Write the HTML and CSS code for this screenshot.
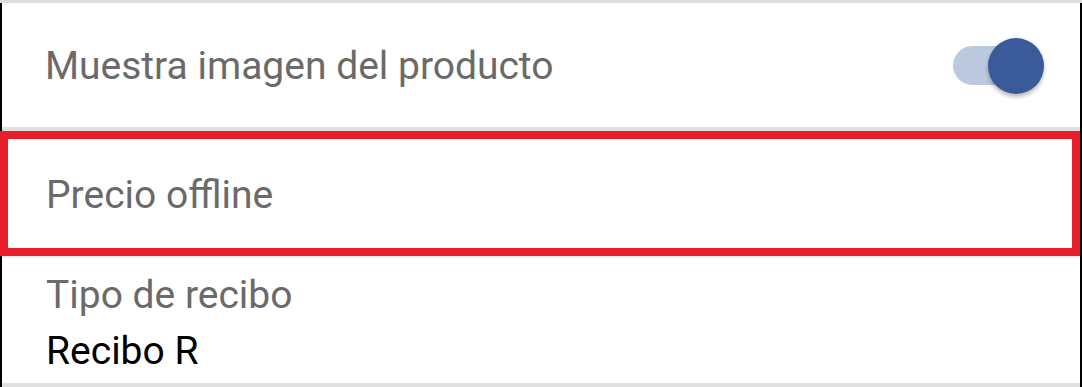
FILE: index.html
```html
<!DOCTYPE html>
<html lang="es">
<head>
<meta charset="utf-8">
<link rel="stylesheet" href="styles.css">
</head>
<body>
<div class="frame">
  <div class="row row-toggle">
    <span class="label">Muestra imagen del producto</span>
    <span class="toggle"><span class="track"></span><span class="knob"></span></span>
  </div>
  <div class="sep"></div>
  <div class="highlight-wrap">
    <div class="row row-highlight">
      <span class="label">Precio offline</span>
    </div>
  </div>
  <div class="sep thin"></div>
  <div class="row row-value">
    <span class="label">Tipo de recibo</span>
    <span class="value">Recibo R</span>
  </div>
  <div class="sep bottom"></div>
</div>
</body>
</html>
```
FILE: styles.css
```css
html, body {
  margin: 0;
  padding: 0;
  background: #ffffff;
}
.frame {
  width: 1082px;
  height: 387px;
  overflow: hidden;
  display: flex;
  flex-direction: column;
  border-top: 3px solid #dedede;
  box-sizing: border-box;
  font-family: Roboto, "Liberation Sans", sans-serif;
  font-size: 39px;
  line-height: 46px;
}
.row {
  border-left: 2px solid #000;
  border-right: 2px solid #000;
  background: #fff;
  padding-left: 44px;
}
.label {
  color: #6a6a6a;
}
.row-toggle {
  height: 124px;
  box-sizing: border-box;
  display: flex;
  align-items: center;
  justify-content: space-between;
  padding-right: 36px;
  padding-top: 1px;
  padding-left: 43px;
}
.toggle {
  position: relative;
  width: 91px;
  height: 56px;
  flex: none;
}
.track {
  position: absolute;
  left: 0;
  top: 8px;
  width: 78px;
  height: 39px;
  border-radius: 20px;
  background: #bdc9df;
}
.knob {
  position: absolute;
  right: 0;
  top: 0;
  width: 56px;
  height: 56px;
  border-radius: 50%;
  background: #3a5a99;
  box-shadow: 0 3px 4px rgba(0, 0, 0, 0.28);
}
.sep {
  height: 4px;
  background: #e0e0e0;
  border-left: 2px solid #000;
  border-right: 2px solid #000;
}
.sep.thin {
  height: 2px;
  background: #ececec;
}
.sep.bottom {
  height: 4px;
  margin-top: auto;
  background: #e0e0e0;
}
.highlight-wrap {
  border-right: 2px solid #000;
}
.row-highlight {
  border: 8px solid #e81e2a;
  height: 125px;
  box-sizing: border-box;
  display: flex;
  align-items: center;
  padding-left: 38px;
  padding-top: 3px;
}
.row-value {
  display: flex;
  flex-direction: column;
  gap: 10px;
  padding-top: 14px;
  flex: 1;
}
.value {
  color: #000000;
}
```
